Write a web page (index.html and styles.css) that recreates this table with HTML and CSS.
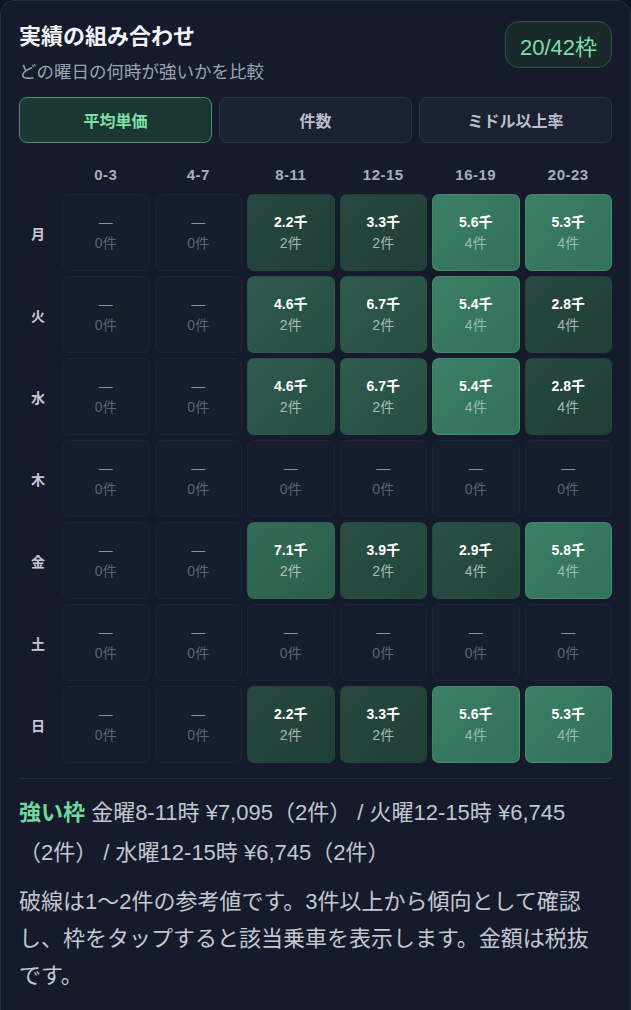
FILE: index.html
```html
<!DOCTYPE html>
<html lang="ja">
<head>
    <meta charset="UTF-8">
    <meta name="viewport" content="width=device-width, initial-scale=1.0">
    <title>実績の組み合わせ</title>
    <link rel="stylesheet" href="styles.css">
</head>
<body>
    <section class="card">
        <div class="card-head">
            <div>
                <h2 class="title">実績の組み合わせ</h2>
                <p class="subtitle">どの曜日の何時が強いかを比較</p>
            </div>
            <div class="badge">20/42枠</div>
        </div>

        <div class="tabs">
            <button class="tab active">平均単価</button>
            <button class="tab">件数</button>
            <button class="tab">ミドル以上率</button>
        </div>

        <div class="matrix">
            <div></div>
            <div class="hour">0-3</div>
            <div class="hour">4-7</div>
            <div class="hour">8-11</div>
            <div class="hour">12-15</div>
            <div class="hour">16-19</div>
            <div class="hour">20-23</div>

            <div class="day">月</div>
            <div class="cell empty"><span class="val">—</span><span class="cnt">0件</span></div>
            <div class="cell empty"><span class="val">—</span><span class="cnt">0件</span></div>
            <div class="cell lv1"><span class="val">2.2千</span><span class="cnt">2件</span></div>
            <div class="cell lv1"><span class="val">3.3千</span><span class="cnt">2件</span></div>
            <div class="cell lv5"><span class="val">5.6千</span><span class="cnt">4件</span></div>
            <div class="cell lv5"><span class="val">5.3千</span><span class="cnt">4件</span></div>

            <div class="day">火</div>
            <div class="cell empty"><span class="val">—</span><span class="cnt">0件</span></div>
            <div class="cell empty"><span class="val">—</span><span class="cnt">0件</span></div>
            <div class="cell lv3"><span class="val">4.6千</span><span class="cnt">2件</span></div>
            <div class="cell lv3"><span class="val">6.7千</span><span class="cnt">2件</span></div>
            <div class="cell lv5"><span class="val">5.4千</span><span class="cnt">4件</span></div>
            <div class="cell lv1"><span class="val">2.8千</span><span class="cnt">4件</span></div>

            <div class="day">水</div>
            <div class="cell empty"><span class="val">—</span><span class="cnt">0件</span></div>
            <div class="cell empty"><span class="val">—</span><span class="cnt">0件</span></div>
            <div class="cell lv3"><span class="val">4.6千</span><span class="cnt">2件</span></div>
            <div class="cell lv3"><span class="val">6.7千</span><span class="cnt">2件</span></div>
            <div class="cell lv5"><span class="val">5.4千</span><span class="cnt">4件</span></div>
            <div class="cell lv1"><span class="val">2.8千</span><span class="cnt">4件</span></div>

            <div class="day">木</div>
            <div class="cell empty"><span class="val">—</span><span class="cnt">0件</span></div>
            <div class="cell empty"><span class="val">—</span><span class="cnt">0件</span></div>
            <div class="cell empty"><span class="val">—</span><span class="cnt">0件</span></div>
            <div class="cell empty"><span class="val">—</span><span class="cnt">0件</span></div>
            <div class="cell empty"><span class="val">—</span><span class="cnt">0件</span></div>
            <div class="cell empty"><span class="val">—</span><span class="cnt">0件</span></div>

            <div class="day">金</div>
            <div class="cell empty"><span class="val">—</span><span class="cnt">0件</span></div>
            <div class="cell empty"><span class="val">—</span><span class="cnt">0件</span></div>
            <div class="cell lv4"><span class="val">7.1千</span><span class="cnt">2件</span></div>
            <div class="cell lv2"><span class="val">3.9千</span><span class="cnt">2件</span></div>
            <div class="cell lv2"><span class="val">2.9千</span><span class="cnt">4件</span></div>
            <div class="cell lv5"><span class="val">5.8千</span><span class="cnt">4件</span></div>

            <div class="day">土</div>
            <div class="cell empty"><span class="val">—</span><span class="cnt">0件</span></div>
            <div class="cell empty"><span class="val">—</span><span class="cnt">0件</span></div>
            <div class="cell empty"><span class="val">—</span><span class="cnt">0件</span></div>
            <div class="cell empty"><span class="val">—</span><span class="cnt">0件</span></div>
            <div class="cell empty"><span class="val">—</span><span class="cnt">0件</span></div>
            <div class="cell empty"><span class="val">—</span><span class="cnt">0件</span></div>

            <div class="day">日</div>
            <div class="cell empty"><span class="val">—</span><span class="cnt">0件</span></div>
            <div class="cell empty"><span class="val">—</span><span class="cnt">0件</span></div>
            <div class="cell lv1"><span class="val">2.2千</span><span class="cnt">2件</span></div>
            <div class="cell lv1"><span class="val">3.3千</span><span class="cnt">2件</span></div>
            <div class="cell lv5"><span class="val">5.6千</span><span class="cnt">4件</span></div>
            <div class="cell lv5"><span class="val">5.3千</span><span class="cnt">4件</span></div>
        </div>

        <hr class="divider">

        <p class="strong"><b>強い枠</b> 金曜8-11時 ¥7,095<span class="nb">（2件）</span> / 火曜12-15時 ¥6,745<span class="nb">（2件）</span> / 水曜12-15時 ¥6,745<span class="nb">（2件）</span></p>
        <p class="note">破線は1〜2件の参考値です。3件以上から傾向として確認し、枠をタップすると該当乗車を表示します。金額は税抜です。</p>
    </section>
</body>
</html>
```

FILE: styles.css
```css
body {
    margin: 0;
    padding: 0;
    background-color: #0f1420;
    font-family: "Liberation Sans", "Noto Sans CJK JP", sans-serif;
    color: #e8ecf2;
}

.card {
    box-sizing: border-box;
    width: 631px;
    min-height: 1024px;
    padding: 20px 18px 20px 18px;
    background-color: #151b2b;
    border: 1px solid #223040;
    border-radius: 14px;
}

.card-head {
    display: flex;
    justify-content: space-between;
    align-items: flex-start;
}

.title {
    margin: 1px 0 0 0;
    font-size: 22px;
    line-height: 30px;
    font-weight: bold;
    color: #f2f4f8;
}

.subtitle {
    margin: 8px 0 0 0;
    font-size: 17.5px;
    line-height: 24px;
    color: #9ba3b1;
}

.badge {
    box-sizing: border-box;
    height: 47px;
    padding: 0 14px;
    display: flex;
    align-items: center;
    border: 1px solid #2d5444;
    border-radius: 14px;
    background-color: #19292c;
    color: #82dcaa;
    font-size: 22px;
}

.tabs {
    display: grid;
    grid-template-columns: repeat(3, 1fr);
    gap: 7px;
    margin-top: 13px;
}

.tab {
    height: 46px;
    border: 1px solid #2a3343;
    border-radius: 8px;
    background-color: #1a2131;
    color: #b9bfca;
    font-family: inherit;
    font-size: 16px;
    font-weight: bold;
}

.tab.active {
    background-color: #1b3731;
    border-color: #4b8f73;
    color: #7fe0a9;
}

.matrix {
    display: grid;
    grid-template-columns: 38px repeat(6, 1fr);
    grid-template-rows: 30px repeat(7, 77px);
    gap: 5px;
    margin-top: 16px;
}

.hour {
    display: flex;
    align-items: center;
    justify-content: center;
    font-size: 15px;
    letter-spacing: 0.5px;
    font-weight: bold;
    color: #a8afbc;
}

.day {
    display: flex;
    align-items: center;
    justify-content: center;
    font-size: 14px;
    font-weight: bold;
    color: #c4c9d3;
}

.cell {
    display: flex;
    flex-direction: column;
    align-items: center;
    justify-content: center;
    border-radius: 7px;
    border: 1px solid transparent;
    line-height: 21px;
    background-image: linear-gradient(135deg, rgba(255, 255, 255, 0.03), rgba(0, 0, 0, 0.08));
}

.cell .val {
    font-size: 14px;
    font-weight: bold;
    color: #ffffff;
}

.cell .cnt {
    font-size: 14px;
    color: rgba(225, 235, 230, 0.7);
}

.cell.empty {
    background-color: #161d2d;
    border-color: #1d2535;
    background-image: none;
}

.cell.empty .val {
    color: #8a92a2;
    font-weight: normal;
}

.cell.empty .cnt {
    color: #5c6475;
}

.lv1 { background-color: #21433a; }
.lv2 { background-color: #244a40; }
.lv3 { background-color: #295548; }
.lv4 { background-color: #2e6652; }
.lv5 {
    background-color: #367a62;
    border-color: rgba(130, 210, 170, 0.2);
}

.lv5 .cnt {
    color: rgba(220, 235, 228, 0.6);
}

.divider {
    margin: 15px 0 0 0;
    border: none;
    border-top: 1px solid #252e3d;
}

.strong {
    margin: 14px 0 0 0;
    font-size: 22px;
    line-height: 40px;
    color: #c1c7d1;
}

.strong b {
    color: #6fd89c;
}

.nb {
    white-space: nowrap;
}

.note {
    margin: 10px 0 0 0;
    padding-right: 4px;
    font-size: 22px;
    line-height: 37px;
    color: #c3c8d1;
}
```
